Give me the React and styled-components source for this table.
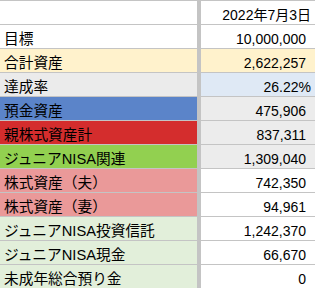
import React from "react";
import styled, { createGlobalStyle } from "styled-components";

const GlobalStyle = createGlobalStyle`
  html, body { margin: 0; padding: 0; background: #ffffff; }
  body { font-family: "Liberation Sans", "Noto Sans CJK JP", sans-serif; color: #000; }
`;

const Sheet = styled.div`
  display: grid;
  grid-template-columns: 197px 114px;
  grid-auto-rows: 23px;
  column-gap: 4px;
  row-gap: 1px;
  padding-top: 1px;
  width: 315px;
  background: #c4c4c4;
`;

const Cell = styled.div`
  display: flex;
  align-items: flex-end;
  background: ${(p) => p.$bg || "#ffffff"};
  overflow: hidden;
  white-space: nowrap;
  line-height: 16px;
`;

const Label = styled(Cell)`
  font-size: 14.7px;
  padding: 0 0 1px 4px;
`;

const Value = styled(Cell)`
  justify-content: flex-end;
  font-size: 14px;
  padding: 0 ${(p) => (p.$tight ? "4px" : "9px")} 1px 0;
`;

const rows = [
  { label: "", value: "2022年7月3日", tight: true },
  { label: "目標", value: "10,000,000" },
  { label: "合計資産", value: "2,622,257", lbg: "#fff2cc", vbg: "#fff2cc" },
  { label: "達成率", value: "26.22%", tight: true, lbg: "#ebebeb", vbg: "#dfe9f5" },
  { label: "預金資産", value: "475,906", lbg: "#5b84c9", vbg: "#ececec" },
  { label: "親株式資産計", value: "837,311", lbg: "#d42d2d", vbg: "#ececec" },
  { label: "ジュニアNISA関連", value: "1,309,040", lbg: "#92d050", vbg: "#ececec" },
  { label: "株式資産（夫）", value: "742,350", lbg: "#ea9999" },
  { label: "株式資産（妻）", value: "94,961", lbg: "#ea9999" },
  { label: "ジュニアNISA投資信託", value: "1,242,370", lbg: "#e2efda" },
  { label: "ジュニアNISA現金", value: "66,670", lbg: "#e2efda" },
  { label: "未成年総合預り金", value: "0", lbg: "#e2efda" },
];

export default function App() {
  return (
    <>
      <GlobalStyle />
      <Sheet>
        {rows.map((r, i) => (
          <React.Fragment key={i}>
            <Label $bg={r.lbg}>{r.label}</Label>
            <Value $bg={r.vbg} $tight={r.tight}>{r.value}</Value>
          </React.Fragment>
        ))}
      </Sheet>
    </>
  );
}
